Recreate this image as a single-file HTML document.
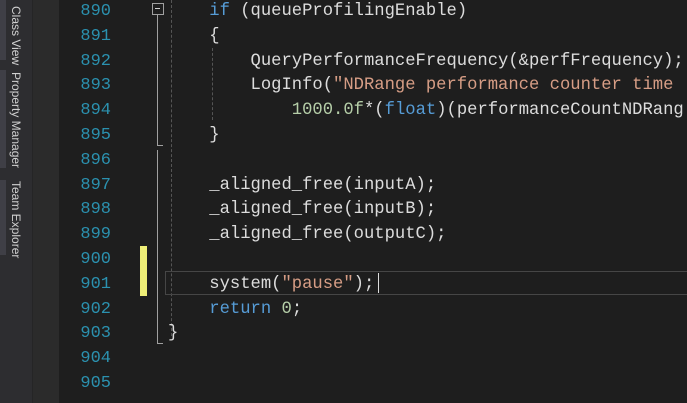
<!DOCTYPE html>
<html><head><style>
html,body{margin:0;width:687px;height:403px;overflow:hidden;}
body{background:#1e1e1e;position:relative;font-family:"Liberation Mono",monospace;}
.wrap{position:absolute;left:0;top:0;width:687px;height:403px;overflow:hidden;}
.side{position:absolute;left:0;top:0;width:32px;height:403px;background:#2d2d30;}
.tabm{position:absolute;left:0;width:6px;background:#3f3f46;}
.vt{position:absolute;left:9px;writing-mode:vertical-rl;font-family:"Liberation Sans",sans-serif;font-size:12px;color:#d0d0d0;}
.gut{position:absolute;left:32px;top:0;width:26px;height:403px;background:#2b2b2b;border-left:1px solid #252526;}
.ln{position:absolute;left:58px;width:53px;text-align:right;color:#2b91af;font-size:17px;}
.c{position:absolute;left:168px;color:#dcdcdc;font-size:17.2px;white-space:pre;}
.k{color:#569cd6}.s{color:#d69d85}.n{color:#b5cea8}
.t{position:absolute;left:0;top:2px;width:687px;height:403px;}
</style></head><body><div class="wrap">
<div class="side">
<div class="tabm" style="top:0;height:60px"></div>
<div class="tabm" style="top:70px;height:98px"></div>
<div class="tabm" style="top:180px;height:75px"></div>
<div class="vt" style="top:6px">Class View</div>
<div class="vt" style="top:72px">Property Manager</div>
<div class="vt" style="top:181px">Team Explorer</div>
</div>
<div class="gut"></div>
<div style="position:absolute;left:152px;top:3px;width:10px;height:10px;border:1px solid #a0a0a0;"></div>
<div style="position:absolute;left:155px;top:8px;width:5px;height:1px;background:#d0d0d0;"></div>
<div style="position:absolute;left:157px;top:15px;width:1px;height:131px;background:#a0a0a0;"></div>
<div style="position:absolute;left:157px;top:145px;width:6px;height:1px;background:#a0a0a0;"></div>
<div style="position:absolute;left:157px;top:150px;width:1px;height:194px;background:#a0a0a0;"></div>
<div style="position:absolute;left:157px;top:343px;width:6px;height:1px;background:#a0a0a0;"></div>
<div style="position:absolute;left:171px;top:0;width:0;height:336px;border-left:1px dashed #555;"></div>
<div style="position:absolute;left:212px;top:48px;width:0;height:72px;border-left:1px dashed #555;"></div>
<div style="position:absolute;left:140px;top:246px;width:7px;height:50px;background:#eeee77;"></div>
<div style="position:absolute;left:165px;top:271px;width:530px;height:22px;border:1px solid #464646;"></div>
<div style="position:absolute;left:378px;top:273px;width:1px;height:20px;background:#dcdcdc;"></div>
<div class="t">
<div class="ln" style="top:0">890</div><div class="ln" style="top:24.8px">891</div><div class="ln" style="top:49.6px">892</div><div class="ln" style="top:74.4px">893</div><div class="ln" style="top:99.2px">894</div><div class="ln" style="top:124px">895</div><div class="ln" style="top:148.8px">896</div><div class="ln" style="top:173.6px">897</div><div class="ln" style="top:198.4px">898</div><div class="ln" style="top:223.2px">899</div><div class="ln" style="top:248px">900</div><div class="ln" style="top:272.8px">901</div><div class="ln" style="top:297.6px">902</div><div class="ln" style="top:322.4px">903</div><div class="ln" style="top:347.2px">904</div><div class="ln" style="top:372px">905</div>
<div class="c" style="top:0">    <span class="k">if</span> (queueProfilingEnable)</div>
<div class="c" style="top:24.8px">    {</div>
<div class="c" style="top:49.6px">        QueryPerformanceFrequency(&amp;perfFrequency);</div>
<div class="c" style="top:74.4px">        LogInfo(<span class="s">"NDRange performance counter time </span></div>
<div class="c" style="top:99.2px">            <span class="n">1000.0f</span>*(<span class="k">float</span>)(performanceCountNDRang</div>
<div class="c" style="top:124px">    }</div>
<div class="c" style="top:173.6px">    _aligned_free(inputA);</div>
<div class="c" style="top:198.4px">    _aligned_free(inputB);</div>
<div class="c" style="top:223.2px">    _aligned_free(outputC);</div>
<div class="c" style="top:272.8px">    system(<span class="s">"pause"</span>);</div>
<div class="c" style="top:297.6px">    <span class="k">return</span> <span class="n">0</span>;</div>
<div class="c" style="top:322.4px">}</div>
</div>
</div></body></html>
